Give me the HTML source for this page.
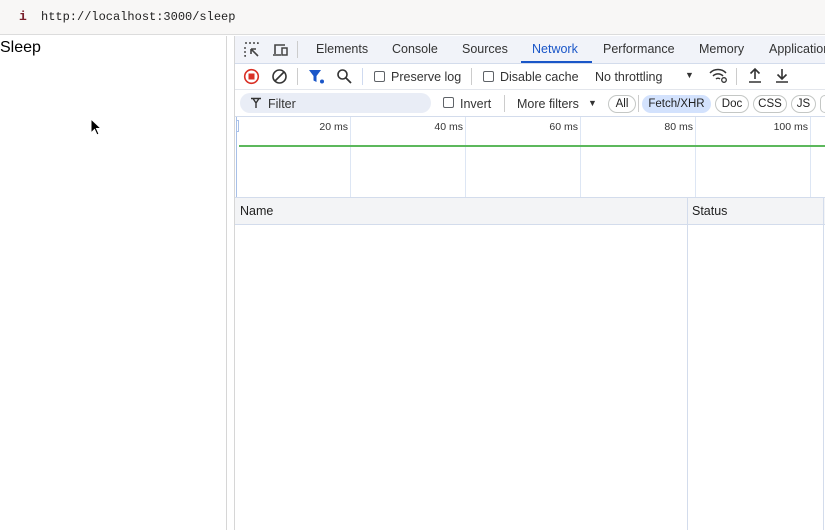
<!DOCTYPE html>
<html><head><style>
*{margin:0;padding:0;box-sizing:border-box}
body{width:825px;height:530px;overflow:hidden;background:#fff;font-family:"Liberation Sans",sans-serif;position:relative;color:#1f1f1f}
.a{position:absolute}
.t{font-size:12.5px;color:#333}
.chip{position:absolute;top:95px;height:18px;border:1px solid #c4c7c5;border-radius:9px;font-size:11.5px;line-height:16px;text-align:center;color:#1f1f1f}
.cb{position:absolute;width:11px;height:11px;border:1px solid #5f6368;border-radius:2px;top:71px}
</style></head><body>
<div class="a" style="left:0;top:0;width:825px;height:35px;background:#f8f7f6;border-bottom:1px solid #dcdcdc"></div>
<div class="a" style="left:19px;top:9px;font:bold 13px 'Liberation Mono',monospace;color:#7a1f2b">i</div>
<div class="a" style="left:41px;top:10px;font:12px 'Liberation Mono',monospace;color:#222">http://localhost:3000/sleep</div>
<div class="a" style="left:0;top:39px;font-size:16px;color:#000">Sleep</div>
<svg class="a" style="left:90px;top:118px" width="14" height="20"><path d="M1 1 L1 15 L4.5 11.5 L7 17 L9 16 L6.5 10.5 L11 10.5 Z" fill="#000" stroke="#fff" stroke-width="1"/></svg>
<div class="a" style="left:226px;top:36px;width:1px;height:494px;background:#d6d6d6"></div>
<div class="a" style="left:234px;top:36px;width:1px;height:494px;background:#d6d6d6"></div>
<div class="a" style="left:235px;top:36px;width:590px;height:28px;background:#f1f3f9;border-bottom:1px solid #d3dcec"></div>
<svg class="a" style="left:243px;top:41px" width="18" height="18"><path d="M2 2h2M6 2h2M10 2h2M14 2h1v1M2 6v2M2 10v2M2 14v1h1" stroke="#444" stroke-width="1.4" fill="none"/><path d="M15 15L8 8M8 8v5M8 8h5" stroke="#444" stroke-width="1.6" fill="none"/></svg>
<svg class="a" style="left:271px;top:41px" width="18" height="18"><path d="M4 13V4h10M2 14h8" stroke="#444" stroke-width="1.6" fill="none"/><rect x="11" y="7" width="5" height="7" stroke="#444" stroke-width="1.5" fill="none"/></svg>
<div class="a" style="left:297px;top:41px;width:1px;height:17px;background:#ccc"></div>
<div class="a t" style="left:316px;top:42px">Elements</div>
<div class="a t" style="left:392px;top:42px">Console</div>
<div class="a t" style="left:462px;top:42px">Sources</div>
<div class="a t" style="left:532px;top:42px;color:#1a56c8">Network</div>
<div class="a" style="left:521px;top:61px;width:71px;height:2px;background:#1a56c8"></div>
<div class="a t" style="left:603px;top:42px">Performance</div>
<div class="a t" style="left:699px;top:42px">Memory</div>
<div class="a t" style="left:769px;top:42px">Application</div>
<div class="a" style="left:235px;top:64px;width:590px;height:26px;background:#fff;border-bottom:1px solid #e3e6ec"></div>
<svg class="a" style="left:243px;top:68px" width="17" height="17"><circle cx="8.5" cy="8.5" r="6.8" stroke="#d93025" stroke-width="1.6" fill="none"/><rect x="5.5" y="5.5" width="6" height="6" fill="#d93025"/></svg>
<svg class="a" style="left:271px;top:68px" width="17" height="17"><circle cx="8.5" cy="8.5" r="6.5" stroke="#333" stroke-width="1.6" fill="none"/><path d="M4 13L13 4" stroke="#333" stroke-width="1.6"/></svg>
<div class="a" style="left:297px;top:68px;width:1px;height:17px;background:#ccc"></div>
<svg class="a" style="left:308px;top:68px" width="18" height="17"><path d="M1 2h12l-4.5 6v6l-3 -1.5V8z" fill="#1a56c8"/><circle cx="14" cy="13.5" r="2" fill="#1a56c8"/></svg>
<svg class="a" style="left:336px;top:68px" width="17" height="17"><circle cx="6.5" cy="6.5" r="4.5" stroke="#333" stroke-width="1.6" fill="none"/><path d="M10 10l5 5" stroke="#333" stroke-width="1.8"/></svg>
<div class="a" style="left:362px;top:68px;width:1px;height:17px;background:#cfdaf0"></div>
<div class="cb" style="left:374px"></div>
<div class="a t" style="left:391px;top:70px">Preserve log</div>
<div class="a" style="left:471px;top:68px;width:1px;height:17px;background:#ccc"></div>
<div class="cb" style="left:483px"></div>
<div class="a t" style="left:500px;top:70px">Disable cache</div>
<div class="a t" style="left:595px;top:70px">No throttling</div>
<div class="a" style="left:685px;top:70px;font-size:9px;color:#333">▼</div>
<svg class="a" style="left:709px;top:68px" width="19" height="16"><path d="M1 5a11 11 0 0 1 16 0M4 8a7 7 0 0 1 10 0M7 11a3 3 0 0 1 4 0" stroke="#333" stroke-width="1.5" fill="none"/><circle cx="15" cy="12" r="2.3" stroke="#333" stroke-width="1.3" fill="#fff"/></svg>
<div class="a" style="left:736px;top:68px;width:1px;height:17px;background:#ccc"></div>
<svg class="a" style="left:747px;top:67px" width="16" height="17"><path d="M8 12V2M3.5 6.5L8 2l4.5 4.5M2 15h12" stroke="#333" stroke-width="1.6" fill="none"/></svg>
<svg class="a" style="left:774px;top:67px" width="16" height="17"><path d="M8 2v10M3.5 7.5L8 12l4.5-4.5M2 15h12" stroke="#333" stroke-width="1.6" fill="none"/></svg>
<div class="a" style="left:235px;top:90px;width:590px;height:27px;background:#fff;border-bottom:1px solid #d3dcec"></div>
<div class="a" style="left:240px;top:93px;width:191px;height:20px;background:#e9edf6;border-radius:10px"></div>
<svg class="a" style="left:250px;top:97px" width="12" height="12"><path d="M1 1.5h10M3 1.5l3 4.5v5M9 1.5l-3 4.5" stroke="#333" stroke-width="1.4" fill="none"/></svg>
<div class="a t" style="left:268px;top:97px">Filter</div>
<div class="cb" style="left:443px;top:97px"></div>
<div class="a t" style="left:460px;top:97px">Invert</div>
<div class="a" style="left:504px;top:95px;width:1px;height:17px;background:#ccc"></div>
<div class="a t" style="left:517px;top:97px">More filters</div>
<div class="a" style="left:588px;top:98px;font-size:9px;color:#333">▼</div>
<div class="chip" style="left:608px;width:28px">All</div>
<div class="a" style="left:638px;top:95px;width:1px;height:17px;background:#ccc"></div>
<div class="chip" style="left:642px;width:69px;background:#d3e2fd;border-color:#d3e2fd">Fetch/XHR</div>
<div class="chip" style="left:715px;width:34px">Doc</div>
<div class="chip" style="left:753px;width:34px">CSS</div>
<div class="chip" style="left:791px;width:25px">JS</div>
<div class="chip" style="left:820px;width:10px"></div>
<div class="a" style="left:236px;top:117px;width:1px;height:80px;background:#a8c0e8"></div>
<div class="a" style="left:236px;top:120px;width:3px;height:12px;border:1px solid #a8c0e8;background:#fff"></div>
<div class="a" style="left:350px;top:117px;width:1px;height:80px;background:#dde6f4"></div>
<div class="a" style="left:465px;top:117px;width:1px;height:80px;background:#dde6f4"></div>
<div class="a" style="left:580px;top:117px;width:1px;height:80px;background:#dde6f4"></div>
<div class="a" style="left:695px;top:117px;width:1px;height:80px;background:#dde6f4"></div>
<div class="a" style="left:810px;top:117px;width:1px;height:80px;background:#dde6f4"></div>
<div class="a" style="left:290px;top:121px;width:58px;text-align:right;font-size:10.5px;color:#333">20 ms</div>
<div class="a" style="left:405px;top:121px;width:58px;text-align:right;font-size:10.5px;color:#333">40 ms</div>
<div class="a" style="left:520px;top:121px;width:58px;text-align:right;font-size:10.5px;color:#333">60 ms</div>
<div class="a" style="left:635px;top:121px;width:58px;text-align:right;font-size:10.5px;color:#333">80 ms</div>
<div class="a" style="left:750px;top:121px;width:58px;text-align:right;font-size:10.5px;color:#333">100 ms</div>
<div class="a" style="left:239px;top:145px;width:586px;height:2px;background:#5cb85c"></div>
<div class="a" style="left:235px;top:197px;width:590px;height:28px;background:#f3f4f6;border-top:1px solid #d3dcec;border-bottom:1px solid #d3dcec"></div>
<div class="a t" style="left:240px;top:204px;color:#1f1f1f">Name</div>
<div class="a t" style="left:692px;top:204px;color:#1f1f1f">Status</div>
<div class="a" style="left:687px;top:198px;width:1px;height:332px;background:#d3dcec"></div>
<div class="a" style="left:823px;top:198px;width:1px;height:332px;background:#d3dcec"></div>
</body></html>
